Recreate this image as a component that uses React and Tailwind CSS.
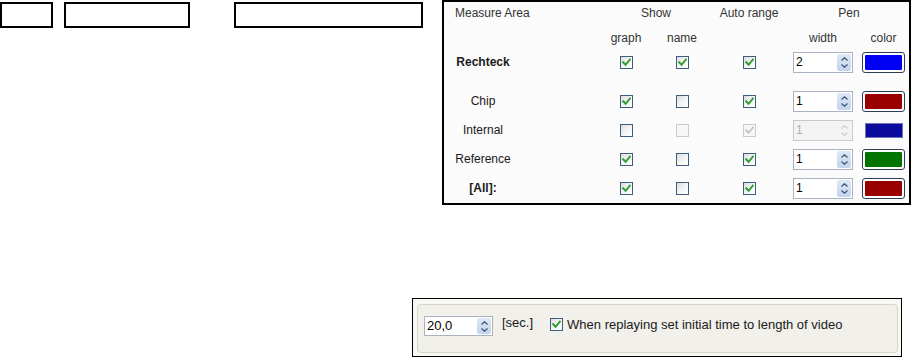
import React from "react";

const font = { fontFamily: '"Liberation Sans", Arial, sans-serif' };

function Check({ checked, disabled }) {
  const border = disabled ? "border-[#c9cdd2]" : "border-[#3d5f7e]";
  const bg = disabled
    ? "bg-[#f7f7f7]"
    : "bg-gradient-to-br from-[#dcdcdc] via-[#f4f4f4] to-white";
  const stroke = disabled ? "#c3c7cc" : "#2fa02f";
  return (
    <span
      className={`relative inline-flex h-[13px] w-[13px] items-center justify-center border ${border} ${bg}`}
    >
      {checked && (
        <svg width="9" height="9" viewBox="0 0 9 9">
          <path
            d="M1.2 4.3 L3.6 6.8 L7.9 1.6"
            fill="none"
            stroke={stroke}
            strokeWidth="2"
            strokeLinecap="square"
          />
        </svg>
      )}
    </span>
  );
}

function Spin({ value, disabled, w = "w-[60px]", h = "h-[21px]", text = "text-[12px]" }) {
  return (
    <div
      className={`flex ${w} ${h} items-stretch border ${
        disabled ? "border-[#c9c9c9] bg-[#f3f3f3] text-[#b0b0b0]" : "border-[#a9b3bf] bg-white text-black"
      } p-[1px]`}
    >
      <span className={`flex-1 pl-[1px] ${text} leading-[16px]`}>{value}</span>
      <span
        className={`flex w-[14px] flex-col items-center justify-center gap-[3px] ${
          disabled ? "bg-[#f3f3f3]" : "bg-gradient-to-b from-[#dfe9f7] to-[#c3d3ec] rounded-[2px]"
        }`}
      >
        <svg width="7" height="4" viewBox="0 0 7 4">
          <path d="M0.5 3.5 L3.5 0.8 L6.5 3.5" fill="none" stroke={disabled ? "#d0d0d0" : "#3f5878"} strokeWidth="1.3" />
        </svg>
        <svg width="7" height="4" viewBox="0 0 7 4">
          <path d="M0.5 0.5 L3.5 3.2 L6.5 0.5" fill="none" stroke={disabled ? "#d0d0d0" : "#3f5878"} strokeWidth="1.3" />
        </svg>
      </span>
    </div>
  );
}

function ColorBtn({ color, flat }) {
  if (flat) {
    return (
      <div className="flex h-[21px] w-[43px] items-center justify-center">
        <div className="h-[15px] w-[38px] border border-[#6f74b0]" style={{ background: color }} />
      </div>
    );
  }
  return (
    <div className="h-[21px] w-[43px] rounded-[3px] border border-[#2d3f55] bg-white p-[2px]">
      <div className="h-full w-full rounded-[1px]" style={{ background: color }} />
    </div>
  );
}

function Row({ label, bold, graph, name, auto, spin, color, disabledRow, mt }) {
  return (
    <div className={`flex h-[22px] items-center ${mt}`}>
      <div className={`w-[78px] text-center text-[12px] ${bold ? "font-bold" : ""}`}>{label}</div>
      <div className="w-[78px]" />
      <div className="flex w-[52px] justify-center">
        <Check checked={graph} />
      </div>
      <div className="flex w-[60px] justify-center">
        <Check checked={name} disabled={disabledRow} />
      </div>
      <div className="flex w-[74px] justify-center">
        <Check checked={auto} disabled={disabledRow} />
      </div>
      <div className="w-[7px]" />
      <Spin value={spin} disabled={disabledRow} />
      <div className="w-[9px]" />
      <ColorBtn color={color} flat={disabledRow} />
    </div>
  );
}

export default function App() {
  return (
    <div className="h-[358px] w-[911px] overflow-hidden bg-white text-[#1a1a1a]" style={font}>
      <div className="flex items-start">
        <div className="mt-[2px] h-[26px] w-[53px] border-2 border-black" />
        <div className="ml-[11px] mt-[2px] h-[26px] w-[126px] border-2 border-black" />
        <div className="ml-[44px] mt-[2px] h-[26px] w-[189px] border-2 border-black" />
        <div className="ml-[19px] h-[205px] w-[469px] border-2 border-black bg-[#fbfbfb]">
          <div className="flex h-[22px] items-center text-[12px] text-[#333]">
            <div className="w-[156px] pl-[11px]">Measure Area</div>
            <div className="w-[112px] text-center">Show</div>
            <div className="w-[74px] text-center">Auto range</div>
            <div className="w-[7px]" />
            <div className="w-[112px] text-center">Pen</div>
          </div>
          <div className="mt-[3px] flex h-[22px] items-center text-[12px] text-[#333]">
            <div className="w-[156px]" />
            <div className="w-[52px] text-center">graph</div>
            <div className="w-[60px] text-center">name</div>
            <div className="w-[74px]" />
            <div className="w-[7px]" />
            <div className="w-[60px] text-center">width</div>
            <div className="w-[9px]" />
            <div className="w-[43px] text-center">color</div>
          </div>
          <Row label="Rechteck" bold graph name auto spin="2" color="#0000f5" mt="mt-[2px]" />
          <Row label="Chip" graph auto spin="1" color="#990000" mt="mt-[17px]" />
          <Row label="Internal" auto disabledRow spin="1" color="#0a0a9c" mt="mt-[7px]" />
          <Row label="Reference" graph auto spin="1" color="#007400" mt="mt-[7px]" />
          <Row label="[All]:" bold graph auto spin="1" color="#990000" mt="mt-[7px]" />
        </div>
      </div>
      <div className="ml-[412px] mt-[93px] h-[59px] w-[490px] border border-black bg-[#f7f7f3] pb-[3px] pl-[4px] pr-[3px] pt-[5px]">
        <div className="flex h-full items-start rounded-[4px] border border-[#d6d5c9] bg-[#f1f0ea] pl-[6px] pt-[11px] text-[13px]">
          <Spin value="20,0" w="w-[69px]" h="h-[20px]" text="text-[13px]" />
          <span className="ml-[9px] mt-[-1px] leading-[16px]">[sec.]</span>
          <span className="ml-[17px] mt-[2px] flex">
            <Check checked />
          </span>
          <span className="ml-[4px] leading-[18px]">When replaying set initial time to length of video</span>
        </div>
      </div>
    </div>
  );
}
